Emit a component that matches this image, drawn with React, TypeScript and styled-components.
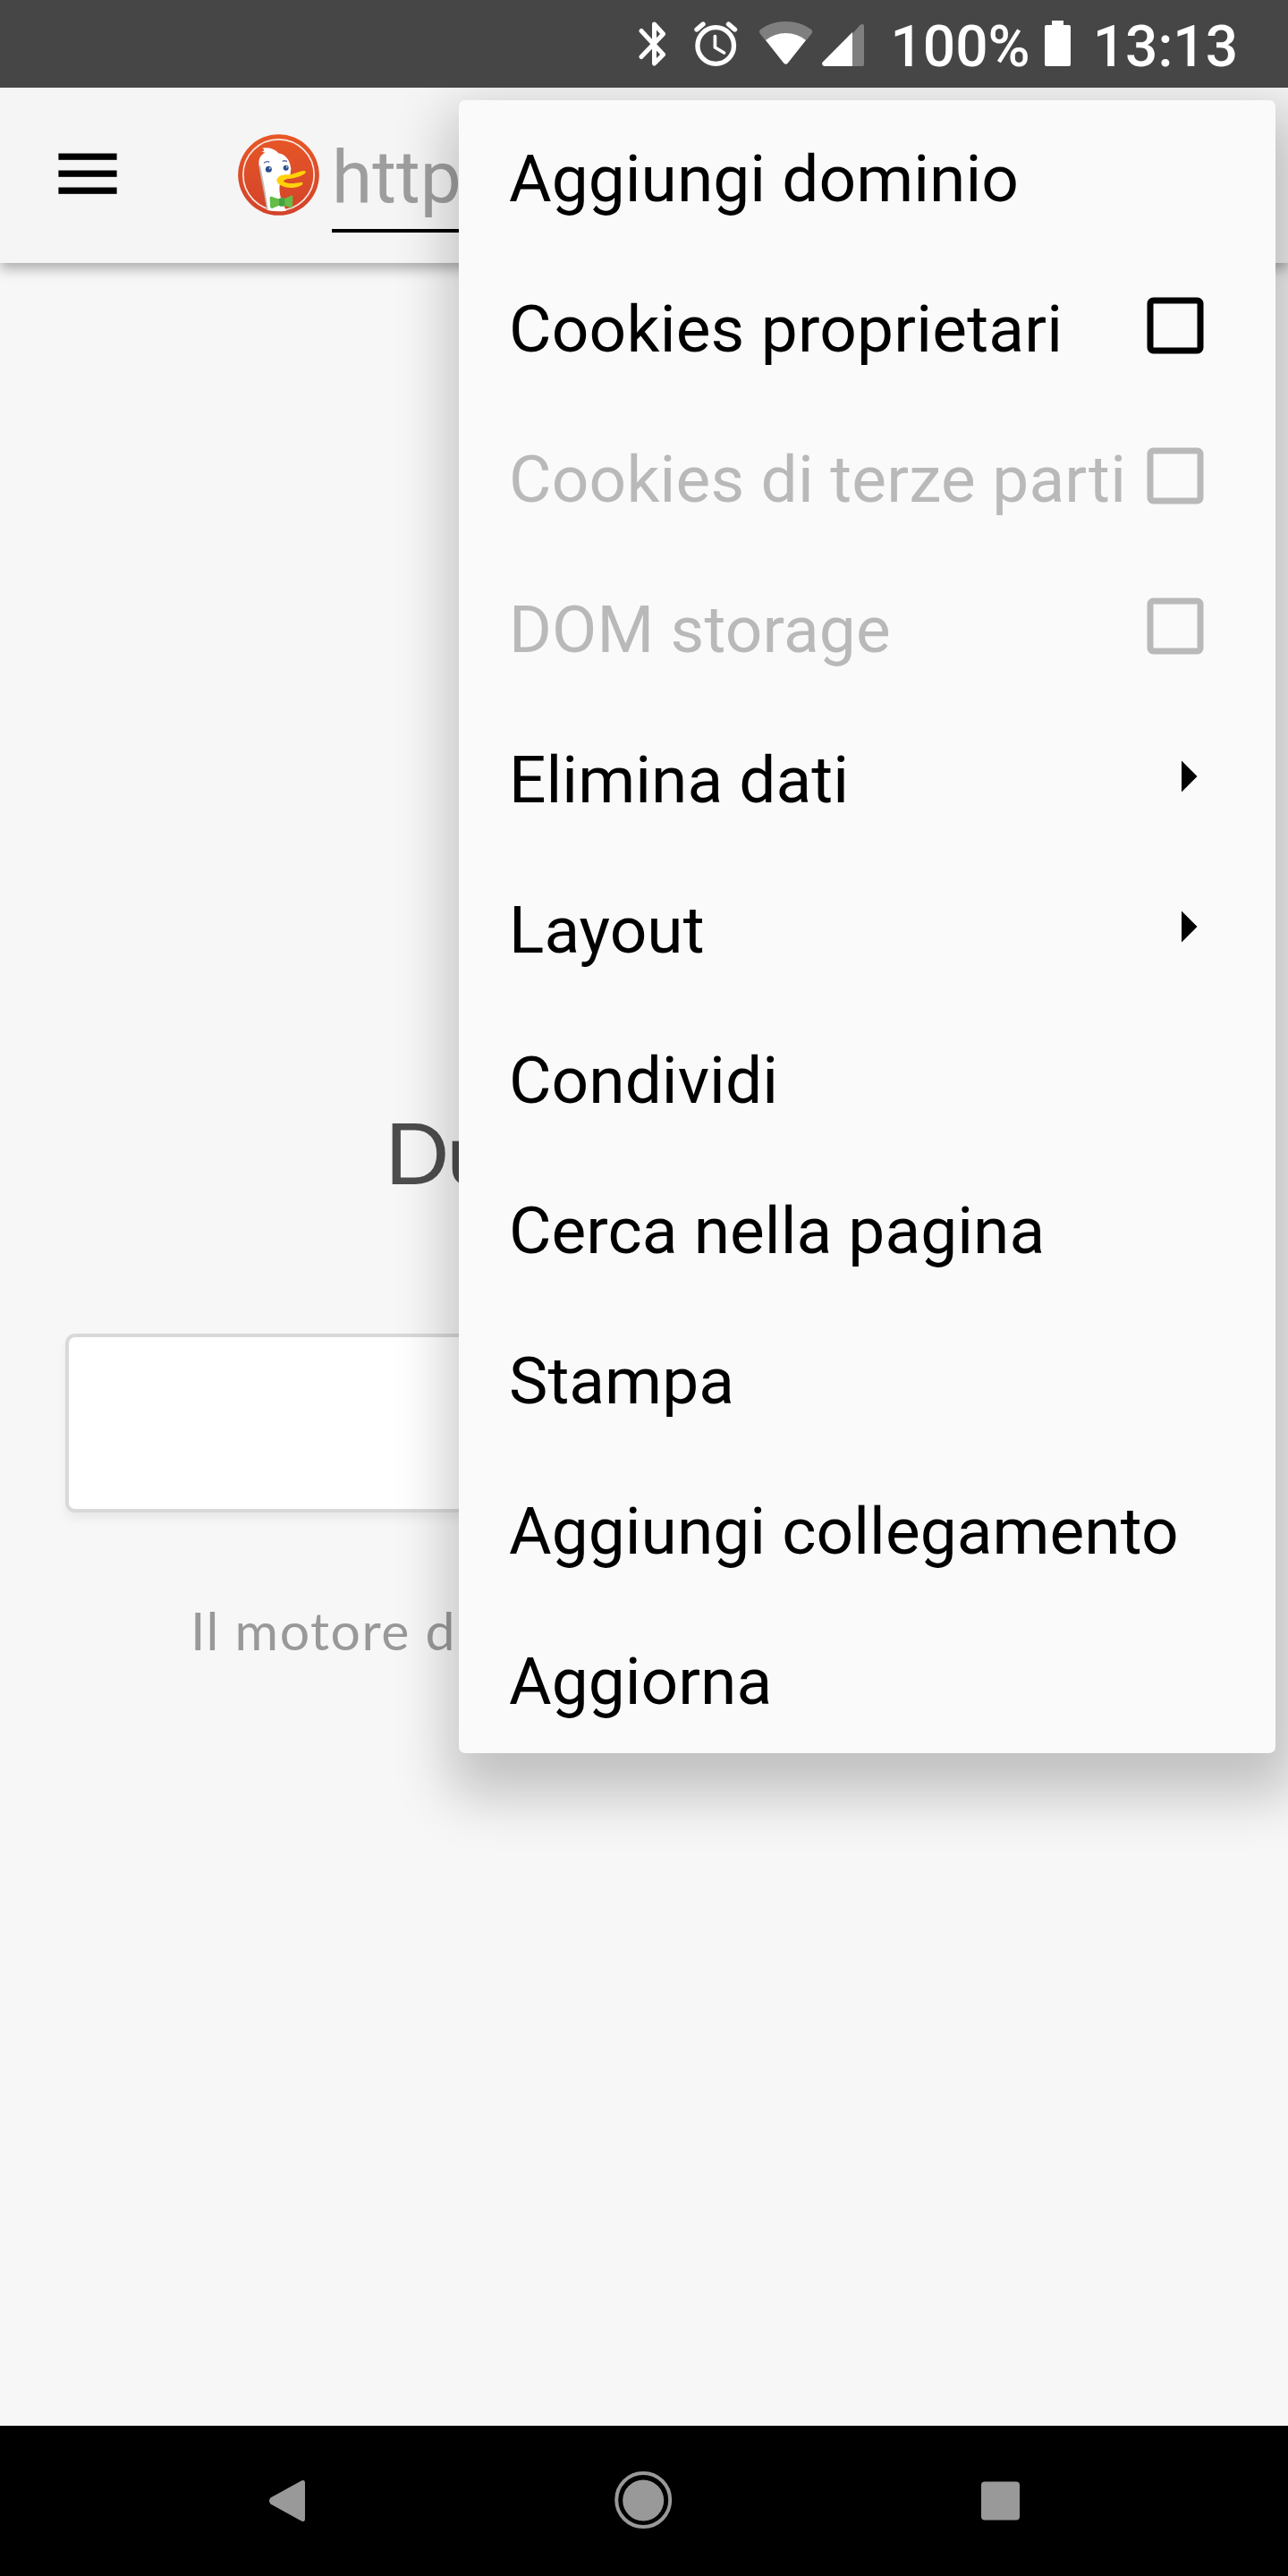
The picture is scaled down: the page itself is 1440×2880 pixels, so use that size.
import React from "react";
import styled, { createGlobalStyle } from "styled-components";

const GlobalStyle = createGlobalStyle`
  *, *::before, *::after { box-sizing: border-box; }
  body { margin: 0; background: #f7f7f7; }
  svg { display: block; flex: none; }
`;

const Screen = styled.div`
  position: relative;
  display: flex;
  flex-direction: column;
  width: 1440px;
  height: 2880px;
  overflow: hidden;
  background: #f7f7f7;
  font-family: Roboto, "Noto Sans", sans-serif;
`;

/* ---------- status bar ---------- */

const StatusBar = styled.header`
  position: relative;
  z-index: 3;
  display: flex;
  align-items: center;
  justify-content: flex-end;
  flex: none;
  height: 98px;
  padding-right: 56px;
  background: #464646;
  color: #fff;
`;

const StatusIcon = styled.span<{ $gap: number }>`
  display: flex;
  margin-right: ${(p) => p.$gap}px;
`;

const StatusText = styled.span<{ $gap?: number }>`
  padding-top: 7px;
  margin-right: ${(p) => p.$gap ?? 0}px;
  font-size: 64px;
  font-weight: 500;
  line-height: 76px;
  white-space: nowrap;
`;

const BluetoothIcon = () => (
  <svg width="32" height="98" viewBox="0 0 32 98" fill="none" stroke="#fff" strokeWidth="5" strokeLinecap="round" strokeLinejoin="round">
    <path d="M3 34.5 L27.5 61 L17.5 71 V27 L27.5 38 L3 63.5" />
  </svg>
);

const AlarmIcon = () => (
  <svg width="50" height="98" viewBox="0 0 50 98" fill="none" stroke="#fff" strokeLinecap="round" strokeLinejoin="round">
    <circle cx="24.2" cy="51" r="20.3" strokeWidth="5.3" />
    <path d="M23.4 40.5 V53 L33.5 59" strokeWidth="3.7" />
    <path d="M3 33 L10 27 M38.5 27 L45.5 33" strokeWidth="5.4" />
  </svg>
);

const WifiIcon = () => (
  <svg width="62" height="98" viewBox="0 0 62 98">
    <path d="M1.7 37.5 Q0 35 2.2 33 C18 21 43 21 59 33 Q61.200 35 59.5 37.500 L53 45.500 C40 35 21 35 8 45.500 Z" fill="#7f7f7f" />
    <path d="M8 45 C21 34.300 40 34.300 53 45 L32.600 70.700 Q30.500 73 28.400 70.700 Z" fill="#fff" />
  </svg>
);

const SignalIcon = () => (
  <svg width="48" height="98" viewBox="0 0 48 98">
    <path d="M34 37.500 L42.600 28 Q47 25 47 30 V72 Q47 74 45 74 H34 Z" fill="#7f7f7f" />
    <path d="M34 36 V74 H2.500 Q-1 73 0.700 69.500 Z" fill="#fff" />
  </svg>
);

const BatteryIcon = () => (
  <svg width="29" height="98" viewBox="0 0 29 98" fill="#fff">
    <path d="M8 23 H21 V28 H27 Q29 28 29 30 V72 Q29 74 27 74 H2 Q0 74 0 72 V30 Q0 28 2 28 H8 Z" />
  </svg>
);

/* ---------- toolbar ---------- */

const Toolbar = styled.nav`
  position: relative;
  z-index: 1;
  display: flex;
  align-items: center;
  flex: none;
  height: 196px;
  padding-left: 65px;
  background: #f5f5f5;
  box-shadow: 0 6px 14px rgba(0, 0, 0, 0.32);
`;

const MenuButton = styled.button`
  display: flex;
  width: 66px;
  padding: 0;
  margin: 0 135px 3px 0;
  border: 0;
  background: none;
`;

const SiteIcon = styled.span`
  display: flex;
  padding-bottom: 1px;
`;

const UrlField = styled.div`
  flex: 1;
  height: 110px;
  margin: 17px 160px 0 14px;
  border-bottom: 4px solid #000;
  color: #9e9e9e;
  font-size: 82px;
  line-height: 96px;
  white-space: nowrap;
`;

const HamburgerIcon = () => (
  <svg width="66" height="48" viewBox="0 0 66 48">
    {[0.5, 19.5, 38.500].map((y) => (
      <rect key={y} x="0.4" y={y} width="65.200" height="7.300" />
    ))}
  </svg>
);

const DuckLogo = () => (
  <svg width="91" height="91" viewBox="0 0 273 273">
    <defs>
      <linearGradient id="disc" x1="0" y1="0" x2="0" y2="1">
        <stop offset="0" stopColor="#e85726" />
        <stop offset="1" stopColor="#d2432b" />
      </linearGradient>
    </defs>
    <circle cx="136.500" cy="136.500" r="136" fill="url(#disc)" />
    <circle cx="136.500" cy="136.500" r="119" fill="none" stroke="#fbe9e3" strokeWidth="5" />
    <path d="M97 252 C88 190 76 140 71 108 C68 84 74 70 91 62 L78 58 C88 58 92 54 82 47 C102 44 122 48 136 64 C160 68 174 86 178 116 L174 145 L142 160 C136 186 141 212 152 234 L162 257 Q130 262 99 255 Z" fill="#fff" />
    <path d="M70 108 C75 150 88 200 96 252 L101 253 C94 195 84 150 75 104 Z" fill="#a79a94" opacity="0.65" />
    <path d="M130 155 C132 142 145 136 165 136 C188 136 205 122 224 123 Q231 126 224 133 C206 144 188 149 166 150 C153 151 150 157 157 161 C174 168 194 164 214 161 Q220 164 215 170 C194 184 164 181 149 174 Q131 166 130 155 Z" fill="#ffd20a" />
    <path d="M107 211 Q112 207 120 212 L138 217 Q146 210 157 216 L181 205 Q185 206 184 214 L183 244 Q181 249 174 246 L156 239 Q146 246 138 239 L115 249 Q108 249 108 242 Z" fill="#65bc46" />
    <path d="M138 217 Q147 212 157 217 V239 Q147 244 138 239 Z" fill="#43a244" />
    <circle cx="103" cy="118" r="10.500" fill="#2d4f8e" />
    <circle cx="107" cy="114" r="2.800" fill="#d5dced" />
    <circle cx="161" cy="113" r="9" fill="#2d4f8e" />
    <circle cx="164" cy="110" r="2.500" fill="#d5dced" />
    <path d="M87 97 Q94 89 106 93 M149 91 Q157 87 165 92" fill="none" stroke="#5c6fae" strokeWidth="4" />
  </svg>
);

/* ---------- page ---------- */

const Page = styled.main`
  flex: 1;
  display: flex;
  flex-direction: column;
  padding: 933px 73px 0;
  font-family: Lato, "Open Sans", sans-serif;
`;

const Title = styled.h1`
  margin: 0 0 0 357px;
  height: 264px;
  color: #4d4d4d;
  font-size: 95px;
  font-weight: 400;
  line-height: 120px;
  letter-spacing: -2px;
`;

const SearchBox = styled.div`
  height: 200px;
  border: 4px solid #d9d9d9;
  border-radius: 11px;
  background: #fff;
  box-shadow: 0 7px 11px rgba(0, 0, 0, 0.06);
`;

const Tagline = styled.p`
  margin: 94px 0 0 140px;
  color: #999;
  font-size: 59px;
  line-height: 76px;
  letter-spacing: 1.5px;
  white-space: nowrap;
`;

/* ---------- overflow menu ---------- */

const Menu = styled.ul`
  position: absolute;
  z-index: 2;
  top: 112px;
  right: 14px;
  width: 913px;
  margin: 0;
  padding: 0;
  list-style: none;
  border-radius: 7px;
  background: #fafafa;
  box-shadow: 7px 29px 62px 18px rgba(0, 0, 0, 0.22);
`;

const MenuItem = styled.li<{ $disabled?: boolean }>`
  display: flex;
  align-items: center;
  justify-content: space-between;
  height: 168px;
  padding-left: 56px;
  color: ${(p) => (p.$disabled ? "#b9b9b9" : "#000")};
`;

const MenuLabel = styled.span<{ $tracking?: number }>`
  padding-top: 8px;
  font-size: 73px;
  line-height: 86px;
  letter-spacing: ${(p) => p.$tracking ?? 0.06}px;
  white-space: nowrap;
`;

const ItemWidget = styled.span<{ $inset: number }>`
  display: flex;
  margin-right: ${(p) => p.$inset}px;
`;

const CheckboxIcon = () => (
  <svg width="84" height="84" viewBox="0 0 84 84" fill="none" stroke="currentColor" strokeWidth="7">
    <rect x="14" y="14" width="56" height="56" rx="3.500" />
  </svg>
);

const SubmenuIcon = () => (
  <svg width="84" height="84" viewBox="0 0 24 24" fill="currentColor">
    <path d="M10 17l5-5-5-5v10z" />
  </svg>
);

type Entry = { label: string; kind?: "check" | "submenu"; disabled?: boolean; tracking?: number };

const entries: Entry[] = [
  { label: "Aggiungi dominio" },
  { label: "Cookies proprietari", kind: "check", tracking: 0.22 },
  { label: "Cookies di terze parti", kind: "check", disabled: true, tracking: 0.2 },
  { label: "DOM storage", kind: "check", disabled: true, tracking: 0.15 },
  { label: "Elimina dati", kind: "submenu" },
  { label: "Layout", kind: "submenu" },
  { label: "Condividi" },
  { label: "Cerca nella pagina" },
  { label: "Stampa" },
  { label: "Aggiungi collegamento" },
  { label: "Aggiorna" },
];

/* ---------- navigation bar ---------- */

const NavBar = styled.footer`
  display: flex;
  align-items: center;
  justify-content: space-between;
  flex: none;
  height: 168px;
  padding: 0 279px 0 279px;
  background: #000;
`;

const NavButton = styled.button`
  display: flex;
  padding: 0;
  border: 0;
  background: none;
`;

const BackIcon = () => (
  <svg width="84" height="84" viewBox="0 0 84 84" fill="#999">
    <path d="M23.500 38.500 L57 20 Q62 17.500 62 22 V62 Q62 66.500 57 64 L23.500 45.500 Q20.500 42 23.500 38.500 Z" />
  </svg>
);

const HomeIcon = () => (
  <svg width="84" height="84" viewBox="0 0 84 84">
    <circle cx="41.200" cy="41" r="30" fill="none" stroke="#999" strokeWidth="4" />
    <circle cx="41.200" cy="41.500" r="23" fill="#999" />
  </svg>
);

const RecentsIcon = () => (
  <svg width="84" height="84" viewBox="0 0 84 84">
    <rect x="20" y="20.500" width="43" height="43" rx="4" fill="#999" />
  </svg>
);

export default function App() {
  return (
    <>
      <GlobalStyle />
      <Screen>
        <StatusBar>
          <StatusIcon $gap={30}><BluetoothIcon /></StatusIcon>
          <StatusIcon $gap={22}><AlarmIcon /></StatusIcon>
          <StatusIcon $gap={9}><WifiIcon /></StatusIcon>
          <StatusIcon $gap={28}><SignalIcon /></StatusIcon>
          <StatusText $gap={16}>100%</StatusText>
          <StatusIcon $gap={25}><BatteryIcon /></StatusIcon>
          <StatusText>13:13</StatusText>
        </StatusBar>
        <Toolbar>
          <MenuButton aria-label="Menu"><HamburgerIcon /></MenuButton>
          <SiteIcon><DuckLogo /></SiteIcon>
          <UrlField>http</UrlField>
        </Toolbar>
        <Page>
          <Title>Du</Title>
          <SearchBox />
          <Tagline>Il motore d</Tagline>
        </Page>
        <NavBar>
          <NavButton><BackIcon /></NavButton>
          <NavButton><HomeIcon /></NavButton>
          <NavButton><RecentsIcon /></NavButton>
        </NavBar>
        <Menu>
          {entries.map((e) => (
            <MenuItem key={e.label} $disabled={e.disabled}>
              <MenuLabel $tracking={e.tracking}>{e.label}</MenuLabel>
              {e.kind === "check" && <ItemWidget $inset={70}><CheckboxIcon /></ItemWidget>}
              {e.kind === "submenu" && <ItemWidget $inset={56}><SubmenuIcon /></ItemWidget>}
            </MenuItem>
          ))}
        </Menu>
      </Screen>
    </>
  );
}
